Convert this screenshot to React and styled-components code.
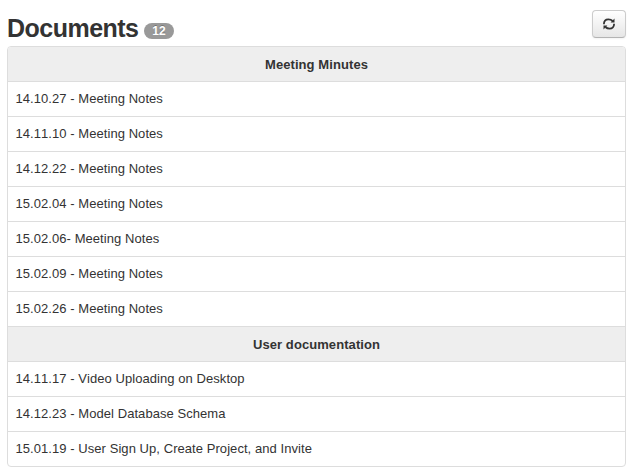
import React from "react";
import styled, { createGlobalStyle } from "styled-components";

const Global = createGlobalStyle`
  * { box-sizing: border-box; }
  body { margin: 0; background: #fff; color: #333; font: 14px/20px "Liberation Sans", Arial, sans-serif; }
`;
const Page = styled.main`width: 633px; height: 476px; padding: 8px 7px 0; overflow: hidden;`;
const Header = styled.header`display: flex; justify-content: space-between; height: 38px; padding-top: 2px;`;
const Title = styled.h1`display: flex; margin: 0; font-size: 25px; line-height: 37px; white-space: nowrap;`;
const TitleText = styled.span`display: block; width: 131px; letter-spacing: -0.52px;`;
const Badge = styled.span`
  width: 30px; height: 16px; margin: 13px 0 0 6px; border-radius: 9px; background: #999; color: #fff;
  font-size: 12px; line-height: 16px; letter-spacing: 0; text-align: center; text-shadow: 0 -1px 0 rgba(0,0,0,.25);
`;
const RefreshButton = styled.button`
  display: flex; align-items: center; justify-content: center; width: 34px; height: 28px; padding: 0;
  color: #333; border: 1px solid #ccc; border-bottom-color: #b3b3b3; border-radius: 4px;
  background: linear-gradient(#fff, #e6e6e6); box-shadow: inset 0 1px 0 rgba(255,255,255,.2), 0 1px 2px rgba(0,0,0,.05);
`;
const List = styled.section`border: 1px solid #ddd; border-radius: 4px; overflow: hidden;`;
const Group = styled.h2`
  margin: 0; height: 35px; font-size: 13px; line-height: 36px; letter-spacing: 0.08px; text-align: center; background: #eee;
  border-top: 1px solid #ddd;
  &:first-child { border-top: 0; height: 34px; }
`;
const Row = styled.div`
  height: 35px; padding: 0 7.5px; border-top: 1px solid #ddd; font-size: 13px; line-height: 34px;
  letter-spacing: 0.06px; font-kerning: none; white-space: nowrap;
`;

const groups = [
  ["Meeting Minutes", ["14.10.27 - Meeting Notes", "14.11.10 - Meeting Notes", "14.12.22 - Meeting Notes", "15.02.04 - Meeting Notes", "15.02.06- Meeting Notes", "15.02.09 - Meeting Notes", "15.02.26 - Meeting Notes"]],
  ["User documentation", ["14.11.17 - Video Uploading on Desktop", "14.12.23 - Model Database Schema", "15.01.19 - User Sign Up, Create Project, and Invite"]],
];

export default function App() {
  return (
    <Page>
      <Global />
      <Header>
        <Title><TitleText>Documents</TitleText><Badge>12</Badge></Title>
        <RefreshButton aria-label="Refresh">
          <svg width="12" height="12" viewBox="0 0 12 12" fill="none" stroke="currentColor" strokeWidth="1.8">
            <path d="M0.900 6.200C0.900 3.200 2.700 1.300 5.400 1.300C7.200 1.300 8.500 1.900 9.600 3M11.100 5.800C11.100 8.800 9.300 10.700 6.600 10.700C4.800 10.700 3.500 10.100 2.400 9" />
            <path d="M7.600 4.500H11.500V0.400ZM4.400 7.500H0.500V11.600Z" fill="currentColor" stroke="none" />
          </svg>
        </RefreshButton>
      </Header>
      <List>
        {groups.map(([name, items]) => (
          <React.Fragment key={name}>
            <Group>{name}</Group>
            {items.map((item) => <Row key={item}>{item}</Row>)}
          </React.Fragment>
        ))}
      </List>
    </Page>
  );
}
